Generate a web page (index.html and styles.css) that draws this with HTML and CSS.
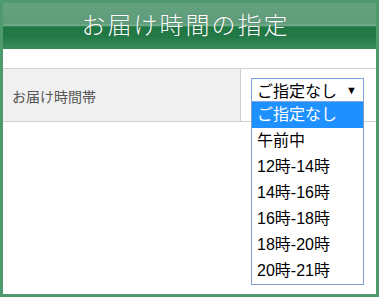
FILE: index.html
```html
<!DOCTYPE html>
<html lang="ja">
<head>
    <meta charset="UTF-8">
    <meta name="viewport" content="width=device-width, initial-scale=1.0">
    <title>お届け時間の指定</title>
    <link rel="stylesheet" href="styles.css">
</head>
    <body>
        <div class="frame">
            <h2 class="title">お届け時間の指定</h2>

            <div class="form-row">
                <div class="form-label">お届け時間帯</div>
                <div class="form-field">
                    <div class="select">
                        <span class="select-value">ご指定なし</span>
                        <span class="select-arrow">▼</span>
                        <ul class="select-list">
                            <li class="selected">ご指定なし</li>
                            <li>午前中</li>
                            <li>12時-14時</li>
                            <li>14時-16時</li>
                            <li>16時-18時</li>
                            <li>18時-20時</li>
                            <li>20時-21時</li>
                        </ul>
                    </div>
                </div>
            </div>
        </div>
    </body>
</html>
```

FILE: styles.css
```css
body {
    margin: 0;
    font-family: "Liberation Sans", "Noto Sans CJK JP", sans-serif;
}

.frame {
    height: 297px;
    box-sizing: border-box;
    border: 3px solid #4e9a6e;
    background: #fff;
}

.title {
    margin: 0;
    height: 46px;
    line-height: 46px;
    padding-right: 8px;
    text-align: center;
    font-size: 24px;
    font-weight: 300;
    letter-spacing: 2px;
    color: #fff;
    text-shadow: 0 0 1px rgba(0,0,0,0.3);
    background: linear-gradient(to bottom,
        #64a17e 0, #5f9d7a 46%, #86b99a 48%, #1f7743 52%,
        #227946 72%, #3b8a5b 100%);
}

.form-row {
    display: flex;
    margin-top: 19px;
    border-top: 1px solid #cfcfcf;
    border-bottom: 1px solid #cfcfcf;
    height: 52px;
}

.form-label {
    width: 228px;
    padding-left: 9px;
    display: flex;
    align-items: center;
    padding-top: 1px;
    background: #f0f0f0;
    color: #555;
    font-size: 14px;
}

.form-field {
    flex: 1;
    border-left: 1px solid #cfcfcf;
    padding: 9px 0 0 10px;
}

.select {
    position: relative;
    width: 113px;
    height: 24px;
    box-sizing: border-box;
    border: 1px solid #7ea6e0;
    display: flex;
    align-items: center;
    padding: 0 5px;
    font-size: 16px;
    color: #000;
}

.select-value {
    flex: 1;
}

.select-arrow {
    font-size: 11px;
    margin-right: 1px;
}

.select-list {
    position: absolute;
    top: 23px;
    left: -1px;
    width: 113px;
    box-sizing: border-box;
    margin: 0;
    padding: 0;
    list-style: none;
    border: 1px solid #7f9dc9;
    border-top: none;
    background: #fff;
}

    .select-list li {
        height: 26px;
        line-height: 26px;
        padding-left: 5px;
    }

    .select-list li.selected {
        background: #1e90ff;
        color: #fff;
    }
```
